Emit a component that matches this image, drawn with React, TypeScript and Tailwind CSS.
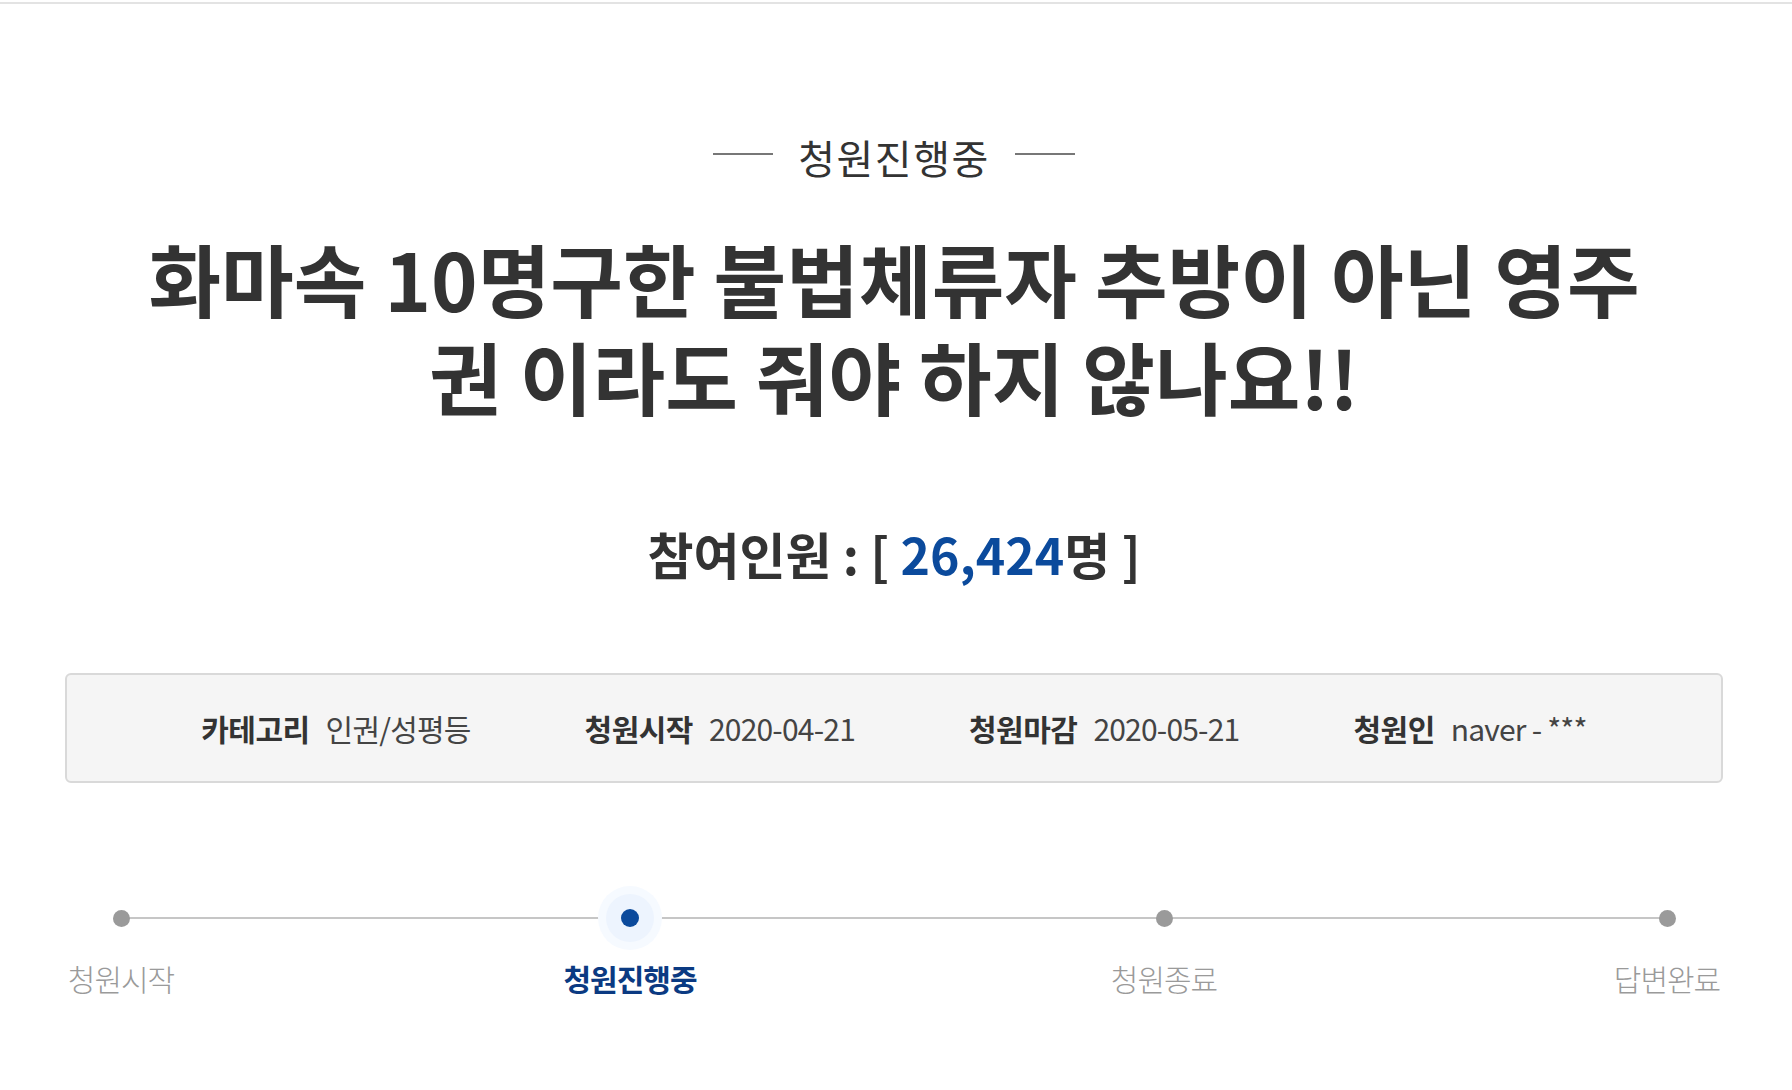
import React from 'react'

const font = { fontFamily: '"Noto Sans CJK KR", "Noto Sans", sans-serif' }

interface Step {
  label: string
  active?: boolean
  className: string
}

// gaps hand-tuned to the reference positions
const steps: Step[] = [
  { label: '청원시작', className: 'w-[112px]' },
  { label: '청원진행중', active: true, className: 'w-[140px] ml-[383px]' },
  { label: '청원종료', className: 'w-[112px] ml-[408px]' },
  { label: '답변완료', className: 'w-[112px] ml-[391px]' },
]

const info = [
  { label: '카테고리', value: '인권/성평등' },
  { label: '청원시작', value: '2020-04-21' },
  { label: '청원마감', value: '2020-05-21' },
  { label: '청원인', value: 'naver - ***' },
]

export default function App() {
  return (
    <div className="min-h-screen bg-white text-[#333]" style={font}>
      <div className="mt-[2px] h-[2px] bg-[#e3e3e3]" />

      <div className="ml-[65px] w-[1658px]">
        {/* status */}
        <div className="pt-[129px] flex items-center justify-center">
          <span className="w-[60px] h-[2px] bg-[#777] -translate-y-[3px]" />
          <span className="mx-[25px] text-[40px] leading-[48px] tracking-[1.5px] text-[#333]">청원진행중</span>
          <span className="w-[60px] h-[2px] bg-[#777] -translate-y-[3px]" />
        </div>

        {/* title */}
        <h1 className="mt-[48px] mx-auto w-[1530px] break-all text-center text-[79px] leading-[98px] font-bold text-[#333]">
          화마속 10명구한 불법체류자 추방이 아닌 영주권 이라도 줘야 하지 않나요!!
        </h1>

        {/* participants */}
        <p className="mt-[96px] text-center text-[50px] leading-[64px] font-bold text-[#333]">
          참여인원 : [ <span className="text-[#0b4a9c]">26,424</span>명 ]
        </p>

        {/* info box */}
        <div className="mt-[88px] h-[110px] rounded-[6px] border-2 border-[#d9d9d9] bg-[#f5f5f5] flex items-center justify-center gap-[114px]">
          {info.map((item) => (
            <div key={item.label} className="flex items-center whitespace-nowrap text-[30px] leading-[36px]">
              <span className="font-bold tracking-[-0.5px] text-[#333]">{item.label}</span>
              <span className="ml-[16px] tracking-[-0.8px] text-[#444]">{item.value}</span>
            </div>
          ))}
        </div>

        {/* progress */}
        <div className="relative mt-[102px] flex">
          <div className="absolute left-[56px] right-[56px] top-[32px] h-[2px] bg-[#c6c6c6]" />
          {steps.map((step) => (
            <div key={step.label} className={`relative flex flex-col items-center ${step.className}`}>
              <div className="h-[66px] w-[66px] flex items-center justify-center">
                {step.active ? (
                  <div className="h-[64px] w-[64px] rounded-full bg-[#f6faff] flex items-center justify-center">
                    <div className="h-[48px] w-[48px] rounded-full bg-[#edf4fe] flex items-center justify-center">
                      <div className="h-[18px] w-[18px] rounded-full bg-[#0b4a9c]" />
                    </div>
                  </div>
                ) : (
                  <div className="h-[17px] w-[17px] rounded-full bg-[#9a9a9a]" />
                )}
              </div>
              <span
                className={
                  step.active
                    ? 'mt-[9px] whitespace-nowrap text-[30px] leading-[36px] tracking-[-1px] font-bold text-[#0b3a82]'
                    : 'mt-[9px] whitespace-nowrap text-[30px] leading-[36px] tracking-[-1px] font-light text-[#9a9a9a]'
                }
              >
                {step.label}
              </span>
            </div>
          ))}
        </div>
      </div>
    </div>
  )
}
